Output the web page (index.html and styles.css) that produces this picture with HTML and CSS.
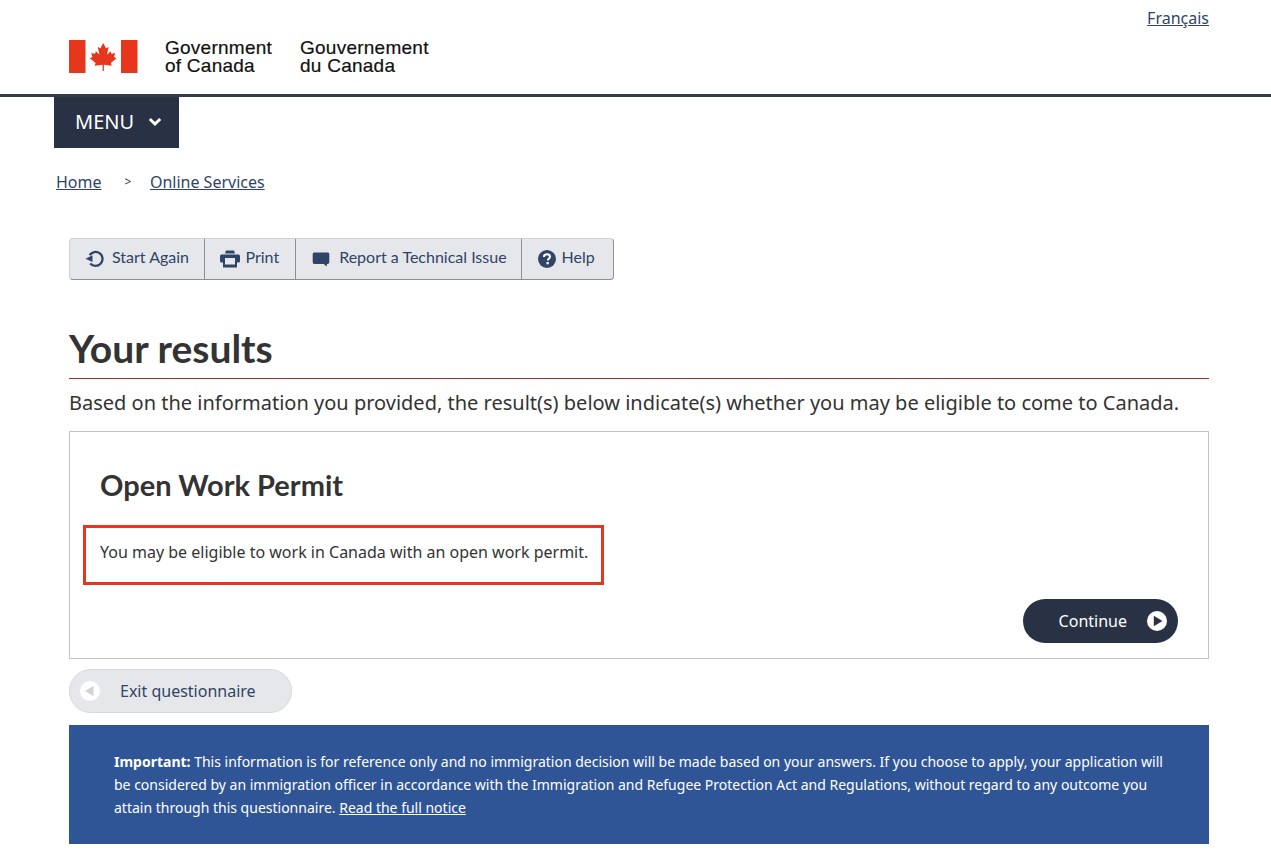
FILE: index.html
```html
<!DOCTYPE html>
<html lang="en">
<head>
  <meta charset="UTF-8" />
  <title>Your results</title>
  <link rel="stylesheet" href="styles.css">
</head>
<body>
  <header class="site-header">
    <div class="lang-row"><a href="#">Français</a></div>
    <div class="brand">
      <svg class="flag" viewBox="0 0 69 33" width="69" height="33" aria-hidden="true">
        <rect x="0" y="0" width="16.500" height="33" fill="#e7361c"/>
        <rect x="52" y="0" width="16.500" height="33" fill="#e7361c"/>
        <path fill="#e7361c" d="M34.200 3L31.400 8.200 28.800 6.900 30.400 14.800 26.900 11.300 26 13.800 22.300 13 23.400 17 20.800 18.300 26.600 23 25.600 25.700 33.500 24.700 33.600 31H34.800L34.900 24.700 42.800 25.700 41.800 23 47.600 18.300 45 17 46.100 13 42.400 13.800 41.500 11.300 38 14.800 39.600 6.900 37 8.200z"/>
      </svg>
      <div class="wordmark">Government<br>of Canada</div>
      <div class="wordmark">Gouvernement<br>du Canada</div>
    </div>
  </header>

  <nav class="menu-bar">
    <button class="menu-btn">MENU
      <svg viewBox="0 0 14 10" width="14" height="10" aria-hidden="true"><path d="M1.800 2l5.200 5 5.200-5" fill="none" stroke="#fff" stroke-width="3"/></svg>
    </button>
  </nav>

  <div class="crumbs">
    <a href="#">Home</a>
    <span class="sep">&gt;</span>
    <a href="#">Online Services</a>
  </div>

  <main class="page">
    <div class="toolbar">
      <a class="tool tool-again" href="#">
        <svg viewBox="0 0 20 20" width="20" height="20" aria-hidden="true"><path d="M4.600 6.200a7 7 0 1 1 .6 8.300" fill="none" stroke="#2f4468" stroke-width="2.300"/><path d="M0.500 9.700L7.500 6.200V13z" fill="#2f4468"/></svg>
        Start Again</a>
      <a class="tool tool-print" href="#">
        <svg viewBox="0 0 20 20" width="20" height="20" aria-hidden="true"><path fill="#2f4468" d="M6 1.500h8l1 3H5z"/><rect x="0" y="5.500" width="20" height="8" rx="1.500" fill="#2f4468"/><rect x="3" y="9" width="14" height="9.500" fill="#2f4468"/><rect x="5" y="9" width="10" height="6.500" fill="#e6e7ea"/></svg>
        Print</a>
      <a class="tool tool-report" href="#">
        <svg viewBox="0 0 18 18" width="18" height="18" aria-hidden="true"><path fill="#2f4468" d="M2.500 2.500h13c1 0 1.800.7 1.800 1.700v8.100c0 1-.8 1.700-1.800 1.700h-.5l-.3 2.500-3-2.500h-9.200c-1 0-1.800-.7-1.800-1.700V4.200c0-1 .8-1.700 1.800-1.700z"/></svg>
        Report a Technical Issue</a>
      <a class="tool tool-help" href="#">
        <svg viewBox="0 0 18 18" width="18" height="18" aria-hidden="true"><circle cx="9" cy="9" r="9" fill="#2f4468"/><path d="M5.900 7c0-1.900 1.400-2.800 3.100-2.800s3 1 3 2.500c0 2-2.200 2-2.200 3.800" fill="none" stroke="#fff" stroke-width="2"/><rect x="8.500" y="12" width="2.300" height="2.300" fill="#fff"/></svg>
        Help</a>
    </div>

    <h1>Your results</h1>
    <p class="intro">Based on the information you provided, the result(s) below indicate(s) whether you may be eligible to come to Canada.</p>

    <section class="result-card">
      <h2>Open Work Permit</h2>
      <div class="result-note">You may be eligible to work in Canada with an open work permit.</div>
      <div class="card-actions">
        <a class="btn-continue" href="#">Continue
          <svg viewBox="0 0 20 20" width="20" height="20" aria-hidden="true"><circle cx="10" cy="10" r="10" fill="#fff"/><path d="M6.800 4.800L15.500 10l-8.700 5.200z" fill="#293245"/></svg>
        </a>
      </div>
    </section>

    <a class="btn-exit" href="#">
      <svg viewBox="0 0 20 20" width="20" height="20" aria-hidden="true"><circle cx="10" cy="10" r="10" fill="#fff"/><path d="M13.500 4.800L5 10l8.500 5.200z" fill="#d0d2d6"/></svg>
      Exit questionnaire</a>

    <aside class="notice">
      <strong>Important:</strong> This information is for reference only and no immigration decision will be made based on your answers. If you choose to apply, your application will be considered by an immigration officer in accordance with the Immigration and Refugee Protection Act and Regulations, without regard to any outcome you attain through this questionnaire. <a href="#">Read the full notice</a>
    </aside>
  </main>
</body>
</html>
```

FILE: styles.css
```css
:root {
  --navy: #293245;
  --link: #2f4468;
  --flag-red: #e7361c;
  --grey-btn: #e6e7ea;
  --text: #333;
}

* {
  box-sizing: border-box;
}

body {
  margin: 0;
  font-family: "Noto Sans", sans-serif;
  color: var(--text);
  background: #fff;
}

a {
  color: var(--link);
}

.site-header {
  height: 97px;
  border-bottom: 3px solid #333a48;
  padding: 0 62px 0 69px;
}

.lang-row {
  height: 40px;
  padding-top: 7px;
  text-align: right;
  font-size: 16px;
  line-height: 22px;
}

.brand {
  display: flex;
  align-items: flex-start;
}

.flag {
  margin-right: 27px;
}

.wordmark {
  font-family: "Liberation Sans", sans-serif;
  font-size: 19px;
  letter-spacing: 0.25px;
  line-height: 18.600px;
  color: #111;
  margin-top: -1.500px;
  width: 135px;
  -webkit-text-stroke: 0.2px #111;
}

.menu-bar {
  padding-left: 54px;
}

.menu-btn {
  display: flex;
  align-items: center;
  gap: 14px;
  width: 125px;
  height: 51px;
  padding: 0 0 2px 21px;
  border: none;
  background: var(--navy);
  color: #fff;
  font-family: "Noto Sans", sans-serif;
  font-size: 20px;
}

.crumbs {
  display: flex;
  align-items: center;
  padding: 23px 0 0 56px;
  font-size: 16px;
  line-height: 22px;
}

.crumbs .sep {
  margin: 0 18.500px 0 23px;
  font-size: 12px;
  color: #333;
}

.page {
  margin: 45px 62px 0 69px;
}

.toolbar {
  display: inline-flex;
  height: 42px;
  background: var(--grey-btn);
  border: 1px solid #cfd1d4;
  border-bottom: 1px solid #8f8f8f;
  border-right: 1px solid #8f8f8f;
  border-radius: 4px;
  font-family: Lato, sans-serif;
  font-size: 16px;
}

.tool {
  display: flex;
  align-items: center;
  padding: 0 14px 5px 15px;
  text-decoration: none;
  border-right: 1px solid #8f8f8f;
}

.tool svg {
  margin-top: 5px;
}

.tool:last-child {
  border-right: none;
}

.tool-again {
  gap: 7px;
  padding-right: 15px;
}

.tool-print {
  gap: 5.500px;
  padding-right: 16px;
}

.tool-report {
  gap: 9px;
  padding-left: 16px;
}

.tool-help {
  gap: 6px;
  padding-left: 16px;
  padding-right: 18px;
}

h1 {
  margin: 44px 0 0;
  padding-bottom: 5px;
  border-bottom: 1px solid #a03030;
  font-family: Lato, sans-serif;
  font-size: 39px;
  line-height: 49px;
  font-weight: 700;
  color: var(--text);
}

.intro {
  margin: 10px 0 15px;
  font-size: 20px;
  line-height: 27px;
}

.result-card {
  height: 228px;
  border: 1px solid #c4c4c4;
  padding: 0 30px;
}

h2 {
  margin: 33px 0 0;
  font-family: Lato, sans-serif;
  font-size: 29px;
  line-height: 40px;
  font-weight: 700;
  color: var(--text);
}

.result-note {
  display: inline-block;
  margin: 20px 0 0 -17px;
  width: 521px;
  height: 60px;
  padding: 13px 0 0 14px;
  border: 3px solid var(--flag-red);
  font-size: 16px;
  line-height: 22px;
}

.card-actions {
  display: flex;
  justify-content: flex-end;
  margin-top: 14px;
}

.btn-continue {
  display: flex;
  align-items: center;
  justify-content: flex-end;
  gap: 20px;
  width: 155px;
  height: 44px;
  padding-right: 11px;
  border-radius: 22px;
  background: var(--navy);
  color: #fff;
  font-size: 16px;
  text-decoration: none;
}

.btn-exit {
  display: flex;
  align-items: center;
  gap: 20px;
  width: 223px;
  height: 44px;
  margin-top: 10px;
  padding-left: 10px;
  border: 1px solid #d6d8db;
  border-radius: 22px;
  background: var(--grey-btn);
  font-size: 16px;
  text-decoration: none;
}

.notice {
  margin-top: 12px;
  height: 119px;
  padding: 25px 45px;
  background: #2f5597;
  color: #fff;
  font-size: 14px;
  line-height: 23px;
}

.notice a {
  color: #fff;
}
```
